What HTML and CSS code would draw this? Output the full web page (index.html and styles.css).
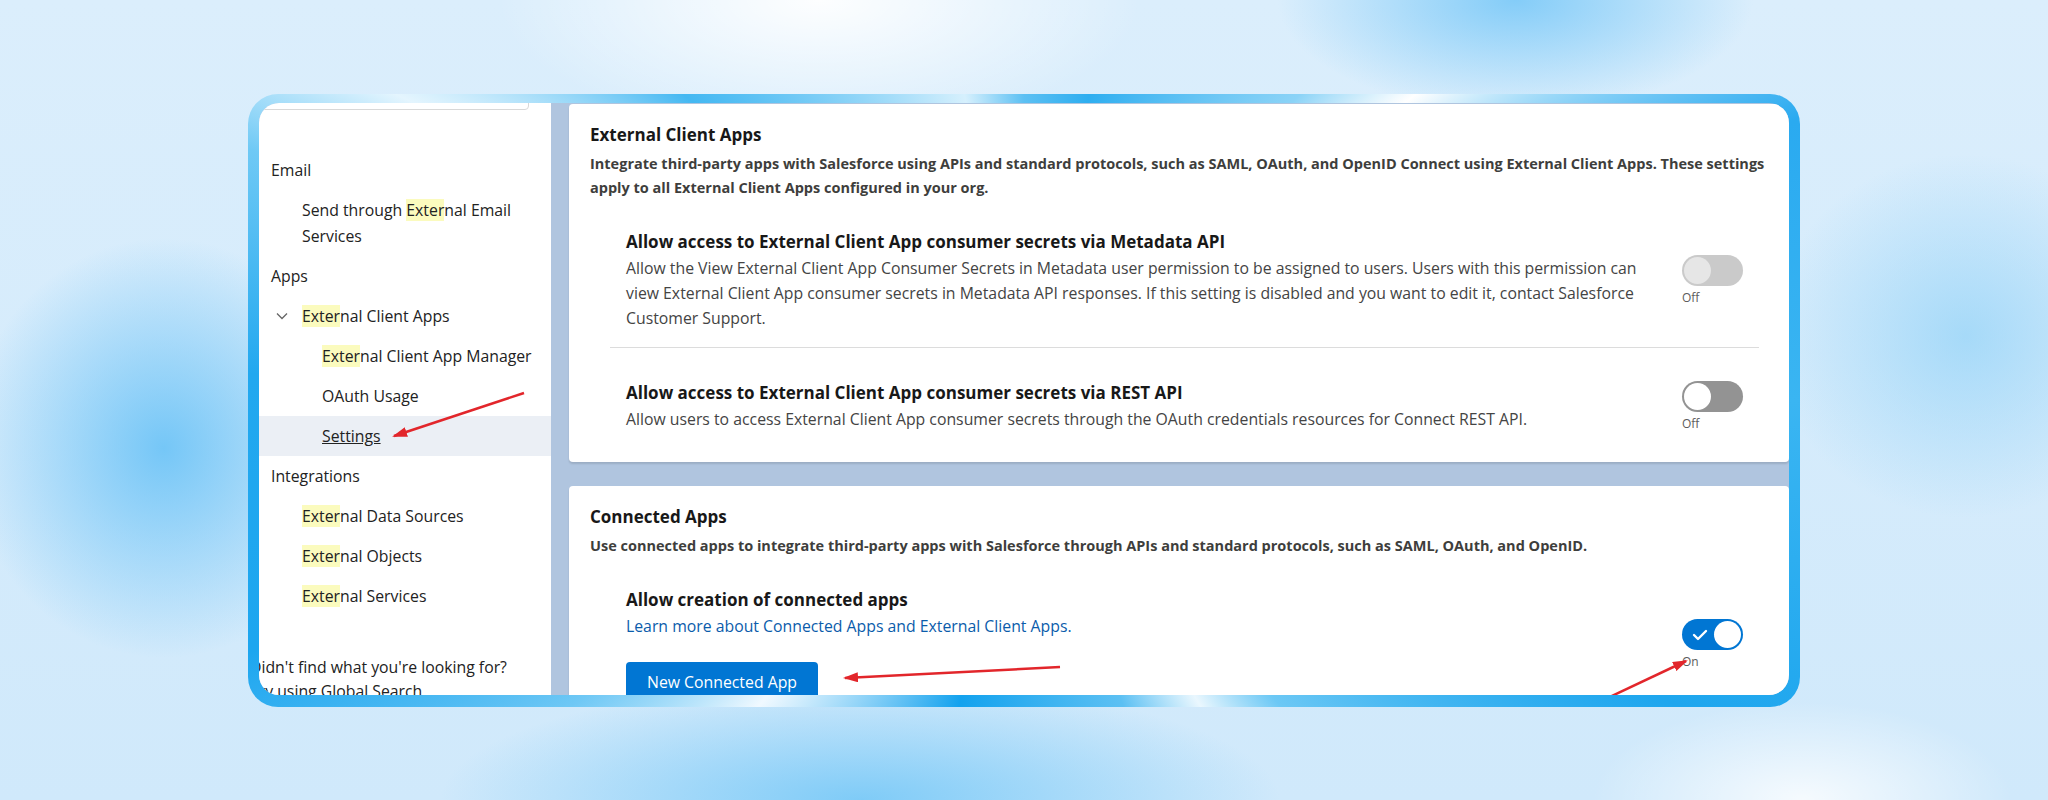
FILE: index.html
```html
<!DOCTYPE html>
<html lang="en">
<head>
    <meta charset="UTF-8">
    <meta name="viewport" content="width=device-width, initial-scale=1.0">
    <title>External Client App Settings</title>
    <link rel="stylesheet" href="styles.css">
</head>
<body>
    <div class="frame">
        <div class="window">
            <aside class="sidebar">
                <div class="search"></div>
                <ul class="nav">
                    <li class="group">Email</li>
                    <li><span>Send through <mark>Exter</mark>nal Email Services</span></li>
                    <li class="group">Apps</li>
                    <li class="open">
                        <svg class="chevron" width="12" height="8" viewBox="0 0 12 8"><path d="M1 1.5 L6 6.5 L11 1.5" fill="none" stroke="#666" stroke-width="1.3"/></svg>
                        <span><mark>Exter</mark>nal Client Apps</span>
                    </li>
                    <li class="sub"><span><mark>Exter</mark>nal Client App Manager</span></li>
                    <li class="sub">OAuth Usage</li>
                    <li class="sub active"><span class="current">Settings</span></li>
                    <li class="group">Integrations</li>
                    <li><span><mark>Exter</mark>nal Data Sources</span></li>
                    <li><span><mark>Exter</mark>nal Objects</span></li>
                    <li><span><mark>Exter</mark>nal Services</span></li>
                </ul>
                <p class="hint">Didn't find what you're looking for?<br>Try using Global Search.</p>
            </aside>

            <main class="content">
                <section class="card">
                    <div class="card-head">
                        <h2>External Client Apps</h2>
                        <p>Integrate third-party apps with Salesforce using APIs and standard protocols, such as SAML, OAuth, and OpenID Connect using External Client Apps. These settings apply to all External Client Apps configured in your org.</p>
                    </div>
                    <div class="settings">
                        <div class="setting">
                            <div class="setting-text">
                                <h3>Allow access to External Client App consumer secrets via Metadata API</h3>
                                <p>Allow the View External Client App Consumer Secrets in Metadata user permission to be assigned to users. Users with this permission can view External Client App consumer secrets in Metadata API responses. If this setting is disabled and you want to edit it, contact Salesforce Customer Support.</p>
                            </div>
                            <div class="switch disabled">
                                <div class="track"><span class="knob"></span></div>
                                <span class="state">Off</span>
                            </div>
                        </div>
                        <div class="setting">
                            <div class="setting-text">
                                <h3>Allow access to External Client App consumer secrets via REST API</h3>
                                <p>Allow users to access External Client App consumer secrets through the OAuth credentials resources for Connect REST API.</p>
                            </div>
                            <div class="switch">
                                <div class="track"><span class="knob"></span></div>
                                <span class="state">Off</span>
                            </div>
                        </div>
                    </div>
                </section>

                <section class="card">
                    <div class="card-head">
                        <h2>Connected Apps</h2>
                        <p>Use connected apps to integrate third-party apps with Salesforce through APIs and standard protocols, such as SAML, OAuth, and OpenID.</p>
                    </div>
                    <div class="settings">
                        <div class="setting">
                            <div class="setting-text">
                                <h3>Allow creation of connected apps</h3>
                                <p><a href="#">Learn more about Connected Apps and External Client Apps.</a></p>
                                <button class="primary">New Connected App</button>
                            </div>
                            <div class="switch on">
                                <div class="track">
                                    <svg class="check" width="16" height="12" viewBox="0 0 16 12"><path d="M2 6 L6 10 L14 2" fill="none" stroke="#fff" stroke-width="2.4" stroke-linecap="round" stroke-linejoin="round"/></svg>
                                    <span class="knob"></span>
                                </div>
                                <span class="state">On</span>
                            </div>
                        </div>
                    </div>
                </section>
            </main>

            <!-- red callout arrows drawn over the page -->
            <svg class="arrows" width="1530" height="592" viewBox="0 0 1530 592">
                <defs>
                    <marker id="head" markerWidth="15" markerHeight="10" refX="13" refY="5" orient="auto" markerUnits="userSpaceOnUse">
                        <path d="M0 0 L15 5 L0 10 Z" fill="#e2262b"/>
                    </marker>
                </defs>
                <line x1="265" y1="290" x2="135" y2="333" stroke="#e2262b" stroke-width="2.5" marker-end="url(#head)"/>
                <line x1="801" y1="564" x2="586" y2="575" stroke="#e2262b" stroke-width="2.5" marker-end="url(#head)"/>
                <line x1="1338" y1="600" x2="1427" y2="558" stroke="#e2262b" stroke-width="2.5" marker-end="url(#head)"/>
            </svg>
        </div>
    </div>
</body>
</html>
```

FILE: styles.css
```css
* {
    box-sizing: border-box;
}

body {
    margin: 0;
    height: 800px;
    overflow: hidden;
    display: flex;
    align-items: center;
    justify-content: center;
    font-family: "Open Sans", "Noto Sans", sans-serif;
    background:
        radial-gradient(ellipse 460px 190px at 40% 0%, rgba(255, 255, 255, 0.95), transparent 70%),
        radial-gradient(ellipse 340px 160px at 74% 0%, rgba(110, 196, 247, 0.8), transparent 70%),
        radial-gradient(ellipse 280px 300px at 8% 56%, rgba(100, 192, 246, 0.85), transparent 70%),
        radial-gradient(ellipse 600px 170px at 42% 100%, rgba(118, 200, 247, 0.9), transparent 70%),
        radial-gradient(ellipse 280px 260px at 96% 42%, rgba(140, 208, 247, 0.65), transparent 70%),
        radial-gradient(ellipse 300px 140px at 88% 100%, rgba(255, 255, 255, 0.8), transparent 70%),
        linear-gradient(180deg, #dbeefc, #d0e9fb);
}

/* glossy blue frame around the window */
.frame {
    width: 1552px;
    height: 613px;
    padding: 9px 11px 12px;
    border-radius: 30px;
    background: conic-gradient(from 0deg at 50% 50%,
        #5cc0f3 0deg, #2eaef0 12deg, #8bd3f7 42deg, #ffffff 52deg, #9ad8f8 60deg,
        #2aaaf0 70deg, #3ab5f2 90deg, #1ea6ee 115deg, #6cc8f5 140deg, #eaf7fe 150deg,
        #5cc0f3 162deg, #13a2ee 192deg, #f0f9ff 221deg, #6fc8f5 236deg, #1da6ef 252deg,
        #22a8ef 272deg, #6fc9f5 288deg, #e4f5fe 296deg, #44b8f2 312deg, #d6f0fd 349deg,
        #5cc0f3 360deg);
}

.window {
    position: relative;
    height: 100%;
    display: flex;
    border-radius: 20px;
    overflow: hidden;
    background: #b0c5df;
}

/* left setup tree */
.sidebar {
    width: 292px;
    flex-shrink: 0;
    background: #fff;
    color: #222;
    font-size: 15.8px;
}

.search {
    height: 30px;
    margin: -23px 22px 0 2px;
    border: 1px solid #d8d8d8;
    border-radius: 4px;
}

.nav {
    list-style: none;
    margin: 40px 0 0;
    padding: 0;
}

.nav li {
    display: flex;
    align-items: center;
    min-height: 40px;
    padding: 7px 16px 7px 43px;
    line-height: 26px;
}

.nav .group {
    padding-left: 12px;
}

.nav .open {
    padding-left: 17px;
    gap: 14px;
}

.nav .sub {
    padding-left: 63px;
}

.nav .active {
    background: #ebeff5;
}

.current {
    text-decoration: underline;
}

mark {
    background: #fbfbbe;
    color: inherit;
}

.hint {
    margin: 39px 0 0 -9px;
    line-height: 24px;
    white-space: nowrap;
}

/* right settings area */
.content {
    flex: 1;
    display: flex;
    flex-direction: column;
    gap: 24px;
    padding: 1px 0 0 18px;
}

.card {
    flex-shrink: 0;
    background: #fff;
    border-radius: 4px;
    box-shadow: 0 2px 2px rgba(0, 0, 0, 0.12);
    padding: 19px 0 16px;
}

.card-head {
    padding: 0 8px 0 21px;
}

.card h2 {
    margin: 0;
    font-size: 17px;
    line-height: 24px;
    font-weight: 700;
    color: #181818;
}

.card-head p {
    margin: 5px 0 0;
    font-size: 14.5px;
    line-height: 24px;
    font-weight: 700;
    color: #3e3e3c;
}

.settings {
    margin: 0 30px 0 41px;
}

.setting {
    display: flex;
    align-items: center;
    gap: 40px;
    padding: 30px 16px 16px;
}

.setting + .setting {
    border-top: 1px solid #dcdcdc;
    padding-top: 33px;
    padding-bottom: 14px;
}

.setting-text {
    flex: 1;
}

.setting h3 {
    margin: 0;
    font-size: 17px;
    line-height: 24px;
    font-weight: 700;
    color: #181818;
}

.setting p {
    margin: 2px 0 0;
    font-size: 15.8px;
    line-height: 25px;
    color: #444;
}

.setting a {
    color: #0b5cab;
    text-decoration: none;
}

.primary {
    display: block;
    height: 40px;
    margin-top: 23px;
    padding: 0 21px;
    border: none;
    border-radius: 4px;
    background: #0176d3;
    color: #fff;
    font-family: inherit;
    font-size: 15.8px;
}

/* toggles */
.switch {
    flex-shrink: 0;
    width: 61px;
    display: flex;
    flex-direction: column;
}

.track {
    display: flex;
    align-items: center;
    width: 61px;
    height: 31px;
    padding: 2px;
    border-radius: 16px;
    background: #939393;
}

.knob {
    width: 27px;
    height: 27px;
    border-radius: 50%;
    background: #fff;
}

.switch.disabled .track {
    background: #cacaca;
}

.switch.disabled .knob {
    background: #e6e6e6;
}

.switch.on .track {
    justify-content: space-between;
    padding-left: 10px;
    background: #0176d3;
}

.state {
    margin-top: 4px;
    font-size: 12px;
    line-height: 16px;
    color: #5c5c5c;
}

.arrows {
    position: absolute;
    top: 0;
    left: 0;
    pointer-events: none;
}
```
